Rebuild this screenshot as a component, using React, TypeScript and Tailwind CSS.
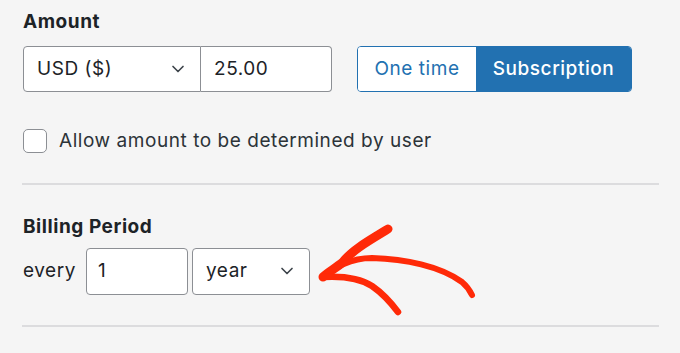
import { ChevronDown } from "lucide-react";

const font = { fontFamily: 'Inter, "Liberation Sans", Arial, sans-serif' };

function Arrow() {
  return (
    <svg
      className="absolute left-[310px] top-[215px] h-[110px] w-[180px]"
      viewBox="310 215 180 110"
      fill="none"
      stroke="#ff2a08"
      strokeLinecap="round"
      strokeLinejoin="round"
    >
      <path d="M388 229 C 370 240, 352 250, 343 262 C 336 268, 328 272, 323 277" strokeWidth="9" />
      <path d="M323 277 C 335 268, 350 258, 372 258 C 405 259, 440 266, 462 282 C 468 287, 470 291, 472 295" strokeWidth="6" />
      <path d="M323 277 C 340 276, 358 277, 372 286 C 385 295, 392 304, 398 312" strokeWidth="6.5" />
    </svg>
  );
}

export default function App() {
  return (
    <div className="relative h-[353px] w-[680px] overflow-hidden bg-[#f5f5f5] text-[#1d2327] tracking-[0.55px]" style={font}>
      <div className="w-[659px] pl-[23px] pt-[10px]">
        <h2 className="text-[19px] font-bold leading-[24px]">Amount</h2>
        <div className="mt-[12px] flex items-center text-[19px]">
          <div className="flex h-[46px] w-[178px] items-center justify-between rounded-l-[4px] border border-[#8c8f94] bg-white pl-[13px] pr-[12px]">
            <span>USD ($)</span>
            <ChevronDown className="h-[20px] w-[20px] text-[#3c434a]" strokeWidth={2} />
          </div>
          <div className="flex h-[46px] w-[131px] items-center rounded-r-[4px] border border-l-0 border-[#8c8f94] bg-white pl-[13px]">
            25.00
          </div>
          <div className="ml-[25px] flex h-[46px] overflow-hidden rounded-[4px] border border-[#2271b1]">
            <span className="flex w-[118px] items-center justify-center bg-white text-[#2271b1]">One time</span>
            <span className="flex w-[155px] items-center justify-center bg-[#2271b1] font-medium text-white">Subscription</span>
          </div>
        </div>
        <label className="mt-[35px] flex items-center gap-[12px] text-[19px] text-[#2c3338]">
          <span className="h-[24px] w-[24px] rounded-[5px] border border-[#8c8f94] bg-white" />
          Allow amount to be determined by user
        </label>
        <hr className="mt-[27px] ml-[-1px] h-[2px] border-0 bg-[#dcdcde]" />
        <h2 className="mt-[30px] text-[19px] font-bold leading-[24px]">Billing Period</h2>
        <div className="mt-[9px] flex items-center text-[19px]">
          <span className="mr-[10px]">every</span>
          <div className="flex h-[47px] w-[102px] items-center rounded-[4px] border border-[#8c8f94] bg-white pl-[11px]">1</div>
          <div className="ml-[4px] flex h-[47px] w-[118px] items-center justify-between rounded-[4px] border border-[#8c8f94] bg-white pl-[13px] pr-[12px]">
            <span>year</span>
            <ChevronDown className="h-[20px] w-[20px] text-[#3c434a]" strokeWidth={2} />
          </div>
        </div>
        <hr className="mt-[30px] ml-[-1px] h-[2px] border-0 bg-[#dcdcde]" />
      </div>
      <Arrow />
    </div>
  );
}
